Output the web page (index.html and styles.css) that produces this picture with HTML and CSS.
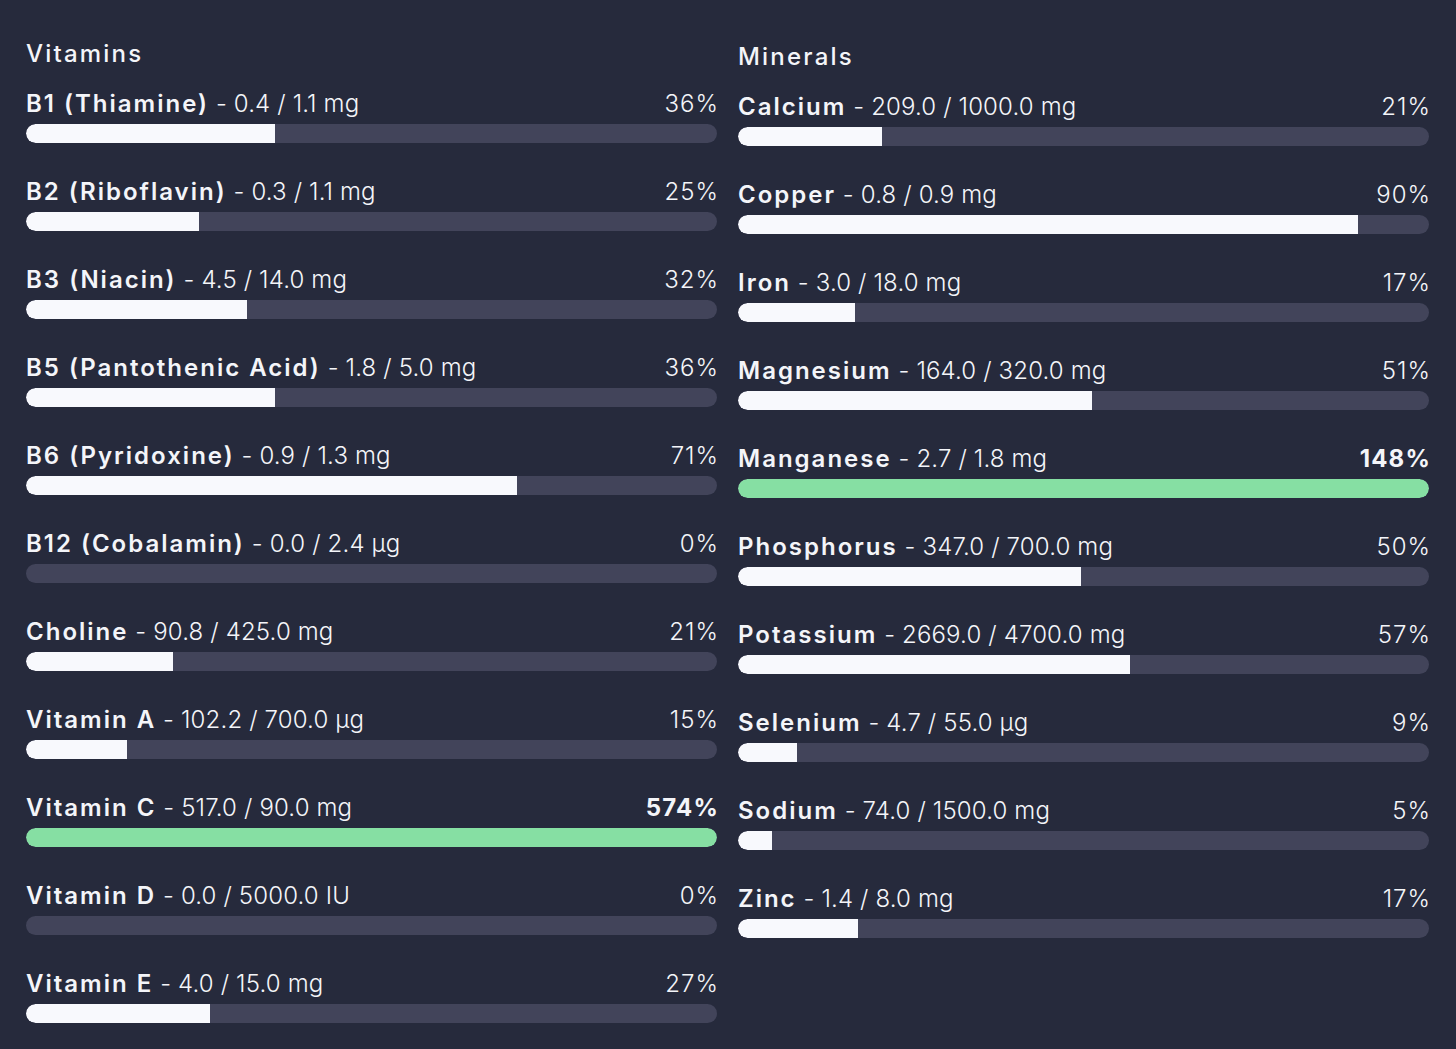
FILE: index.html
```html
<!DOCTYPE html>
<html>
<head>
<meta charset="utf-8">
<link rel="stylesheet" href="styles.css">
</head>
<body>
<div class="page">
  <section class="col vitamins">
    <h2 class="title">Vitamins</h2>
    <div class="row"><div class="line"><span class="name">B1 (Thiamine)</span><span class="val"> - 0.4 / 1.1 mg</span><span class="pct">36%</span></div><div class="track"><div class="fill" style="width:36%"></div></div></div>
    <div class="row"><div class="line"><span class="name">B2 (Riboflavin)</span><span class="val"> - 0.3 / 1.1 mg</span><span class="pct">25%</span></div><div class="track"><div class="fill" style="width:25%"></div></div></div>
    <div class="row"><div class="line"><span class="name">B3 (Niacin)</span><span class="val"> - 4.5 / 14.0 mg</span><span class="pct">32%</span></div><div class="track"><div class="fill" style="width:32%"></div></div></div>
    <div class="row"><div class="line"><span class="name">B5 (Pantothenic Acid)</span><span class="val"> - 1.8 / 5.0 mg</span><span class="pct">36%</span></div><div class="track"><div class="fill" style="width:36%"></div></div></div>
    <div class="row"><div class="line"><span class="name">B6 (Pyridoxine)</span><span class="val"> - 0.9 / 1.3 mg</span><span class="pct">71%</span></div><div class="track"><div class="fill" style="width:71%"></div></div></div>
    <div class="row"><div class="line"><span class="name">B12 (Cobalamin)</span><span class="val"> - 0.0 / 2.4 µg</span><span class="pct">0%</span></div><div class="track"><div class="fill" style="width:0%"></div></div></div>
    <div class="row"><div class="line"><span class="name">Choline</span><span class="val"> - 90.8 / 425.0 mg</span><span class="pct">21%</span></div><div class="track"><div class="fill" style="width:21.3%"></div></div></div>
    <div class="row"><div class="line"><span class="name">Vitamin A</span><span class="val"> - 102.2 / 700.0 µg</span><span class="pct">15%</span></div><div class="track"><div class="fill" style="width:14.6%"></div></div></div>
    <div class="row"><div class="line"><span class="name">Vitamin C</span><span class="val"> - 517.0 / 90.0 mg</span><span class="pct over">574%</span></div><div class="track"><div class="fill green" style="width:100%"></div></div></div>
    <div class="row"><div class="line"><span class="name">Vitamin D</span><span class="val"> - 0.0 / 5000.0 IU</span><span class="pct">0%</span></div><div class="track"><div class="fill" style="width:0%"></div></div></div>
    <div class="row"><div class="line"><span class="name">Vitamin E</span><span class="val"> - 4.0 / 15.0 mg</span><span class="pct">27%</span></div><div class="track"><div class="fill" style="width:26.6%"></div></div></div>
  </section>
  <section class="col minerals">
    <h2 class="title">Minerals</h2>
    <div class="row"><div class="line"><span class="name">Calcium</span><span class="val"> - 209.0 / 1000.0 mg</span><span class="pct">21%</span></div><div class="track"><div class="fill" style="width:20.9%"></div></div></div>
    <div class="row"><div class="line"><span class="name">Copper</span><span class="val"> - 0.8 / 0.9 mg</span><span class="pct">90%</span></div><div class="track"><div class="fill" style="width:89.7%"></div></div></div>
    <div class="row"><div class="line"><span class="name">Iron</span><span class="val"> - 3.0 / 18.0 mg</span><span class="pct">17%</span></div><div class="track"><div class="fill" style="width:16.9%"></div></div></div>
    <div class="row"><div class="line"><span class="name">Magnesium</span><span class="val"> - 164.0 / 320.0 mg</span><span class="pct">51%</span></div><div class="track"><div class="fill" style="width:51.2%"></div></div></div>
    <div class="row"><div class="line"><span class="name">Manganese</span><span class="val"> - 2.7 / 1.8 mg</span><span class="pct over">148%</span></div><div class="track"><div class="fill green" style="width:100%"></div></div></div>
    <div class="row"><div class="line"><span class="name">Phosphorus</span><span class="val"> - 347.0 / 700.0 mg</span><span class="pct">50%</span></div><div class="track"><div class="fill" style="width:49.6%"></div></div></div>
    <div class="row"><div class="line"><span class="name">Potassium</span><span class="val"> - 2669.0 / 4700.0 mg</span><span class="pct">57%</span></div><div class="track"><div class="fill" style="width:56.8%"></div></div></div>
    <div class="row"><div class="line"><span class="name">Selenium</span><span class="val"> - 4.7 / 55.0 µg</span><span class="pct">9%</span></div><div class="track"><div class="fill" style="width:8.5%"></div></div></div>
    <div class="row"><div class="line"><span class="name">Sodium</span><span class="val"> - 74.0 / 1500.0 mg</span><span class="pct">5%</span></div><div class="track"><div class="fill" style="width:4.9%"></div></div></div>
    <div class="row"><div class="line"><span class="name">Zinc</span><span class="val"> - 1.4 / 8.0 mg</span><span class="pct">17%</span></div><div class="track"><div class="fill" style="width:17.3%"></div></div></div>
  </section>
</div>
</body>
</html>
```

FILE: styles.css
```css
html, body {
  margin: 0;
  padding: 0;
  background: #262a3c;
}
body {
  font-family: Inter, "Noto Sans", sans-serif;
  color: #f4f5f9;
  width: 1456px;
  height: 1049px;
  overflow: hidden;
}
.page {
  display: grid;
  grid-template-columns: 691px 691px;
  column-gap: 21px;
  padding: 38px 27px 0 26px;
}
.minerals {
  padding-top: 3px;
}
.title {
  box-sizing: border-box;
  margin: 0 0 20px 0;
  padding-top: 1px;
  height: 30px;
  font-size: 24px;
  line-height: 30px;
  font-weight: 500;
  letter-spacing: 2.2px;
}
.row {
  margin-bottom: 33px;
}
.line {
  box-sizing: border-box;
  display: flex;
  align-items: baseline;
  padding-top: 1px;
  height: 30px;
  line-height: 30px;
  font-size: 24px;
  white-space: pre;
}
.name {
  font-weight: 600;
  letter-spacing: 2px;
}
.val {
  font-weight: 300;
  letter-spacing: 0.15px;
}
.pct {
  margin-left: auto;
  margin-right: -2px;
  font-weight: 300;
  letter-spacing: 1px;
}
.pct.over {
  font-weight: 700;
  letter-spacing: 1.2px;
}
.track {
  margin-top: 6px;
  height: 19px;
  border-radius: 10px;
  background: #42445a;
  overflow: hidden;
}
.fill {
  height: 100%;
  background: #f8f9fd;
  border-radius: 10px 0 0 10px;
}
.fill.green {
  background: #86dfa3;
  border-radius: 10px;
}
```
